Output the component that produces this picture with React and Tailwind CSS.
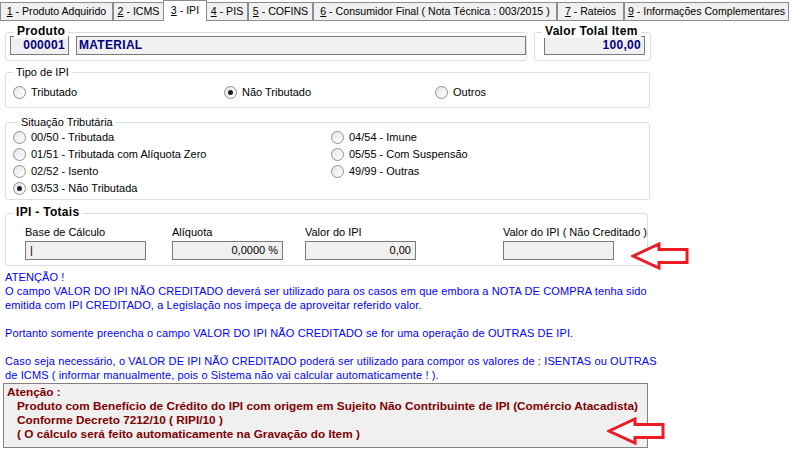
import React from 'react'

const FONT = { fontFamily: '"Liberation Sans", Arial, sans-serif' }

const TABS = [
  { k: '1', t: ' - Produto Adquirido', w: 'w-[113px]' },
  { k: '2', t: ' - ICMS', w: 'w-[51px]' },
  { k: '3', t: ' - IPI', w: 'w-[44px]', active: true },
  { k: '4', t: ' - PIS', w: 'w-[42px]' },
  { k: '5', t: ' - COFINS', w: 'w-[65px]' },
  { k: '6', t: ' - Consumidor Final ( Nota Técnica : 003/2015 )', w: 'w-[244px]' },
  { k: '7', t: ' - Rateios', w: 'w-[67px]' },
  { k: '9', t: ' - Informações Complementares', w: 'w-[165px]' },
]

function Radio({ checked, label }) {
  return (
    <div className="flex items-center gap-[5px] h-[17px]">
      <span className="w-[13px] h-[13px] rounded-full border border-[#8e8f8f] bg-gradient-to-br from-[#e6e6e6] to-white flex items-center justify-center">
        {checked && <span className="w-[5px] h-[5px] rounded-full bg-[#1c1c1c]" />}
      </span>
      <span className="text-[11px] text-black leading-none">{label}</span>
    </div>
  )
}

function Group({ label, bold, className, labelClass, children }) {
  return (
    <div className={`relative border border-[#d5dfe5] rounded-[3px] ${className}`}>
      <span
        className={`absolute bg-white px-[3px] text-black whitespace-nowrap ${
          bold ? 'font-bold text-[12px] tracking-[0.3px] leading-[13px] top-[-8px]' : 'text-[11px] leading-[12px] top-[-7px]'
        } ${labelClass || 'left-[9px]'}`}
      >
        {label}
      </span>
      {children}
    </div>
  )
}

function Arrow({ className }) {
  return (
    <svg className={`absolute ${className}`} width="60" height="28" viewBox="0 0 60 28">
      <path
        d="M2 14 L28 2 L28 7.5 L56 7.5 L56 20.5 L28 20.5 L28 26 Z"
        fill="white"
        stroke="#ed1c24"
        strokeWidth="3"
        strokeLinejoin="miter"
      />
    </svg>
  )
}

const valueBox = 'h-[19px] border border-[#7a7a7a] bg-[#f0f0f0] text-[12px] font-bold tracking-[0.3px] text-[#000080] leading-[17px]'

export default function App() {
  return (
    <div className="relative w-[796px] h-[453px] bg-white overflow-hidden" style={FONT}>
      {/* abas */}
      <div className="flex items-end h-[21px]">
        {TABS.map((tab) => (
          <div
            key={tab.k}
            className={`${tab.w} flex items-center justify-center text-[10.6px] text-black border border-[#898c95] ${
              tab.active ? 'h-[21px] bg-white border-b-0 -mx-[1px] z-10' : 'h-[19px] bg-[#f0f0f0]'
            }`}
          >
            <span className="whitespace-nowrap">
              <span className="underline">{tab.k}</span>
              {tab.t}
            </span>
          </div>
        ))}
      </div>

      <div className="pl-[5px]">
        {/* produto */}
        <div className="flex gap-[7px] mt-[11px]">
          <Group label="Produto" bold className="w-[522px] h-[29px] pt-[3px] pl-[4px]" labelClass="left-[8px]">
            <div className="flex gap-[7px]">
              <div className={`w-[59px] text-right pr-[3px] ${valueBox}`}>000001</div>
              <div className={`w-[450px] pl-[2px] ${valueBox}`}>MATERIAL</div>
            </div>
          </Group>
          <Group label="Valor Tolal Item" bold className="w-[117px] h-[29px] pt-[3px] pl-[9px]" labelClass="left-[7px]">
            <div className={`w-[101px] text-right pr-[3px] ${valueBox}`}>100,00</div>
          </Group>
        </div>

        {/* tipo de IPI */}
        <Group label="Tipo de IPI" className="w-[645px] h-[36px] mt-[11px] pt-[11px] pl-[7px]" labelClass="left-[7px]">
          <div className="flex">
            <div className="w-[211px]"><Radio label="Tributado" /></div>
            <div className="w-[211px]"><Radio checked label="Não Tributado" /></div>
            <div><Radio label="Outros" /></div>
          </div>
        </Group>

        {/* situação tributária */}
        <Group label="Situação Tributária" className="w-[645px] h-[78px] mt-[14px] pt-[6px] pl-[7px]" labelClass="left-[12px]">
          <div className="flex">
            <div className="w-[318px]">
              <Radio label="00/50 - Tributada" />
              <Radio label="01/51 - Tributada com Alíquota Zero" />
              <Radio label="02/52 - Isento" />
              <Radio checked label="03/53 - Não Tributada" />
            </div>
            <div>
              <Radio label="04/54 - Imune" />
              <Radio label="05/55 - Com Suspensão" />
              <Radio label="49/99 - Outras" />
            </div>
          </div>
        </Group>

        {/* IPI totais */}
        <Group label="IPI - Totais" bold className="w-[643px] h-[53px] mt-[13px] pt-[12px] pl-[19px]" labelClass="left-[7px]">
          <div className="flex text-[11px] text-black">
            <div className="w-[147px]">
              <div className="leading-[12px] h-[15px]">Base de Cálculo</div>
              <div className="w-[121px] h-[19px] border border-[#7a7a7a] bg-[#f0f0f0] pl-[4px] leading-[17px]">|</div>
            </div>
            <div className="w-[133px]">
              <div className="leading-[12px] h-[15px]">Alíquota</div>
              <div className="w-[111px] h-[19px] border border-[#7a7a7a] bg-[#f0f0f0] text-right pr-[4px] leading-[17px]">0,0000 %</div>
            </div>
            <div className="w-[198px]">
              <div className="leading-[12px] h-[15px]">Valor do IPI</div>
              <div className="w-[111px] h-[19px] border border-[#7a7a7a] bg-[#f0f0f0] text-right pr-[4px] leading-[17px]">0,00</div>
            </div>
            <div>
              <div className="leading-[12px] h-[15px]">Valor do IPI ( Não Creditado )</div>
              <div className="w-[111px] h-[19px] border border-[#7a7a7a] bg-[#f0f0f0]" />
            </div>
          </div>
        </Group>

        {/* aviso */}
        <div className="mt-[4px] text-[11px] leading-[14px] tracking-[0.12px] text-[#0000ff]">
          <p>ATENÇÃO !</p>
          <p>
            O campo VALOR DO IPI NÃO CREDITADO deverá ser utilizado para os casos em que embora a NOTA DE COMPRA tenha sido
            <br />
            emitida com IPI CREDITADO, a Legislação nos impeça de aproveitar referido valor.
          </p>
          <p className="mt-[14px]">Portanto somente preencha o campo VALOR DO IPI NÃO CREDITADO se for uma operação de OUTRAS DE IPI.</p>
          <p className="mt-[14px]">
            Caso seja necessário, o VALOR DE IPI NÃO CREDITADO poderá ser utilizado para compor os valores de : ISENTAS ou OUTRAS
            <br />
            de ICMS ( informar manualmente, pois o Sistema não vai calcular automaticamente ! ).
          </p>
        </div>
      </div>

      {/* atenção - crédito */}
      <div className="ml-[3px] mt-[1px] w-[645px] h-[65px] border border-[#828282] bg-[#f0f0f0] px-[3px] pt-[1px] text-[11.8px] leading-[14px] font-bold text-[#800000]">
        <p>Atenção :</p>
        <div className="pl-[10px]">
          <p>Produto com Benefício de Crédito do IPI com origem em Sujeito Não Contribuinte de IPI (Comércio Atacadista)</p>
          <p>Conforme Decreto 7212/10 ( RIPI/10 )</p>
          <p>( O cálculo será feito automaticamente na Gravação do Item )</p>
        </div>
      </div>

      <Arrow className="left-[631px] top-[242px]" />
      <Arrow className="left-[607px] top-[417px]" />
    </div>
  )
}
